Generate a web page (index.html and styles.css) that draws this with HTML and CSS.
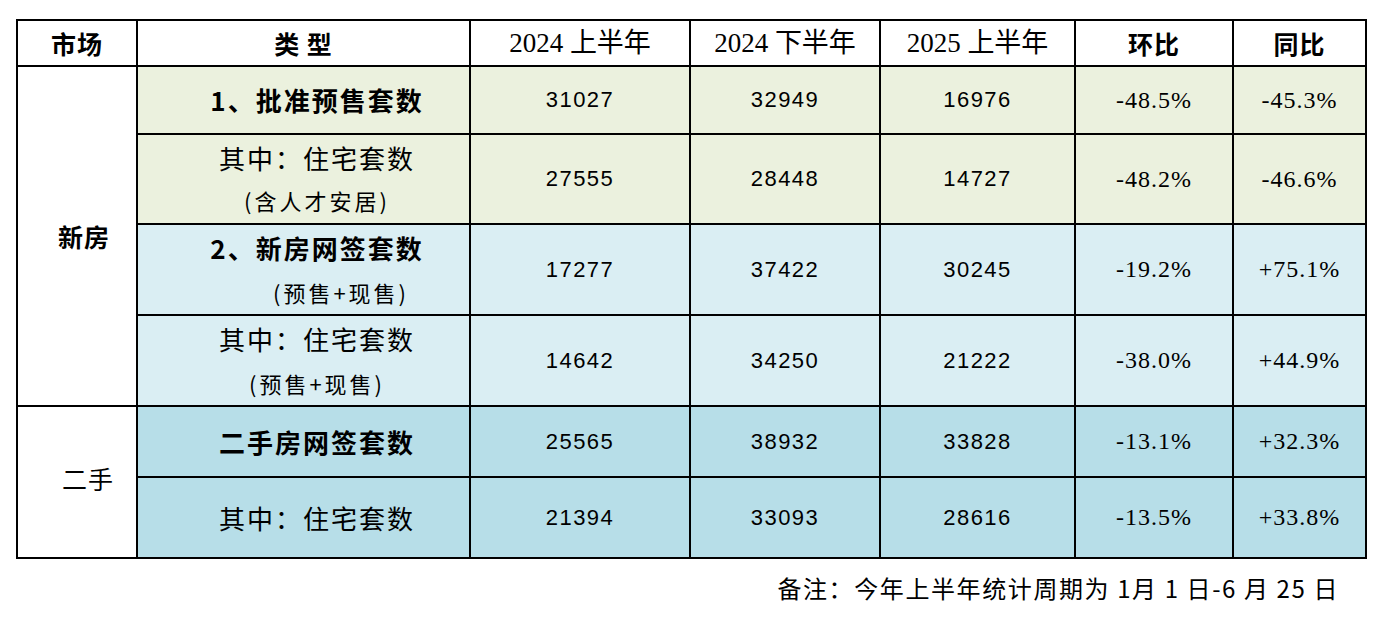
FILE: index.html
```html
<!DOCTYPE html>
<html lang="zh-CN">
<head>
<meta charset="utf-8">
<title>新房二手房成交统计</title>
<link rel="stylesheet" href="styles.css">
</head>
<body>
<div class="page">
  <table class="data">
    <colgroup>
      <col class="c-market">
      <col class="c-type">
      <col class="c-h1">
      <col class="c-h2">
      <col class="c-h3">
      <col class="c-hb">
      <col class="c-tb">
    </colgroup>
    <thead>
      <tr class="head">
        <th class="bold">市场</th>
        <th class="bold">类 型</th>
        <th class="period">2024 上半年</th>
        <th class="period">2024 下半年</th>
        <th class="period">2025 上半年</th>
        <th class="bold">环比</th>
        <th class="bold">同比</th>
      </tr>
    </thead>
    <tbody>
      <tr class="green r1">
        <td class="market bold" rowspan="4">新房</td>
        <td class="type bold">1、批准预售套数</td>
        <td class="num">31027</td>
        <td class="num">32949</td>
        <td class="num">16976</td>
        <td class="pct">-48.5%</td>
        <td class="pct">-45.3%</td>
      </tr>
      <tr class="green r2">
        <td class="type"><span class="line">其中：住宅套数</span><span class="line sub">(含人才安居)</span></td>
        <td class="num">27555</td>
        <td class="num">28448</td>
        <td class="num">14727</td>
        <td class="pct">-48.2%</td>
        <td class="pct">-46.6%</td>
      </tr>
      <tr class="light r3">
        <td class="type"><span class="line bold">2、新房网签套数</span><span class="line sub shift">(预售+现售)</span></td>
        <td class="num">17277</td>
        <td class="num">37422</td>
        <td class="num">30245</td>
        <td class="pct">-19.2%</td>
        <td class="pct">+75.1%</td>
      </tr>
      <tr class="light r4">
        <td class="type"><span class="line">其中：住宅套数</span><span class="line sub">(预售+现售)</span></td>
        <td class="num">14642</td>
        <td class="num">34250</td>
        <td class="num">21222</td>
        <td class="pct">-38.0%</td>
        <td class="pct">+44.9%</td>
      </tr>
      <tr class="blue r5">
        <td class="market second" rowspan="2">二手</td>
        <td class="type bold">二手房网签套数</td>
        <td class="num">25565</td>
        <td class="num">38932</td>
        <td class="num">33828</td>
        <td class="pct">-13.1%</td>
        <td class="pct">+32.3%</td>
      </tr>
      <tr class="blue r6">
        <td class="type">其中：住宅套数</td>
        <td class="num">21394</td>
        <td class="num">33093</td>
        <td class="num">28616</td>
        <td class="pct">-13.5%</td>
        <td class="pct">+33.8%</td>
      </tr>
    </tbody>
  </table>
  <p class="note">备注：今年上半年统计周期为 1月 1 日-6 月 25 日</p>
</div>
</body>
</html>
```
FILE: styles.css
```css
html, body {
  margin: 0;
  padding: 0;
  background: #ffffff;
}

body {
  font-family: "Noto Sans CJK SC", sans-serif;
  color: #000000;
}

.page {
  padding: 19px 0 0 16px;
  width: 1351px;
}

.data {
  border-collapse: collapse;
  table-layout: fixed;
  width: 1351px;
}

.c-market { width: 120px; }
.c-type { width: 333px; }
.c-h1 { width: 220px; }
.c-h2 { width: 190px; }
.c-h3 { width: 195px; }
.c-hb { width: 158px; }
.c-tb { width: 133px; }

.data th,
.data td {
  border: 2px solid #000000;
  padding: 0;
  text-align: center;
  vertical-align: middle;
  font-weight: 400;
}

.head th {
  height: 44px;
  background: #ffffff;
  font-size: 25px;
  line-height: 30px;
  letter-spacing: 1px;
}

.head th.period {
  font-family: "Liberation Serif", "Noto Sans CJK SC", serif;
  font-size: 27px;
  letter-spacing: 0;
}

.data .bold,
.head th.bold {
  font-weight: 700;
}

.green td { background: #ebf1de; }
.light td { background: #daeef3; }
.blue td { background: #b7dee8; }

.data td.market {
  background: #ffffff;
  font-size: 25px;
  padding-left: 14px;
  letter-spacing: 1px;
}

.data td.market.second {
  padding-left: 22px;
  padding-bottom: 8px;
}

.r1 td { height: 66px; }
.r2 td { height: 88px; }
.r3 td { height: 89px; }
.r4 td { height: 89px; }
.r5 td { height: 69px; }
.r6 td { height: 79px; }

.data td.type {
  font-size: 26px;
  letter-spacing: 2px;
  line-height: 34px;
  padding-left: 27px;
}

.type .line {
  display: block;
  line-height: 42px;
}

.type .sub {
  font-size: 22px;
  letter-spacing: 3px;
  font-weight: 400;
}

.r3 .type .line { line-height: 44px; }
.r4 .type .line { line-height: 44px; }

.type .shift {
  padding-left: 48px;
}

.data td.num {
  font-family: "Liberation Sans", sans-serif;
  font-size: 22px;
  letter-spacing: 1.5px;
}

.data td.pct {
  font-family: "Liberation Serif", serif;
  font-size: 24px;
  letter-spacing: 1px;
}

.note {
  margin: 14px 0 0 0;
  padding-right: 28px;
  text-align: right;
  font-size: 24px;
  line-height: 30px;
  letter-spacing: 1.6px;
}
```
